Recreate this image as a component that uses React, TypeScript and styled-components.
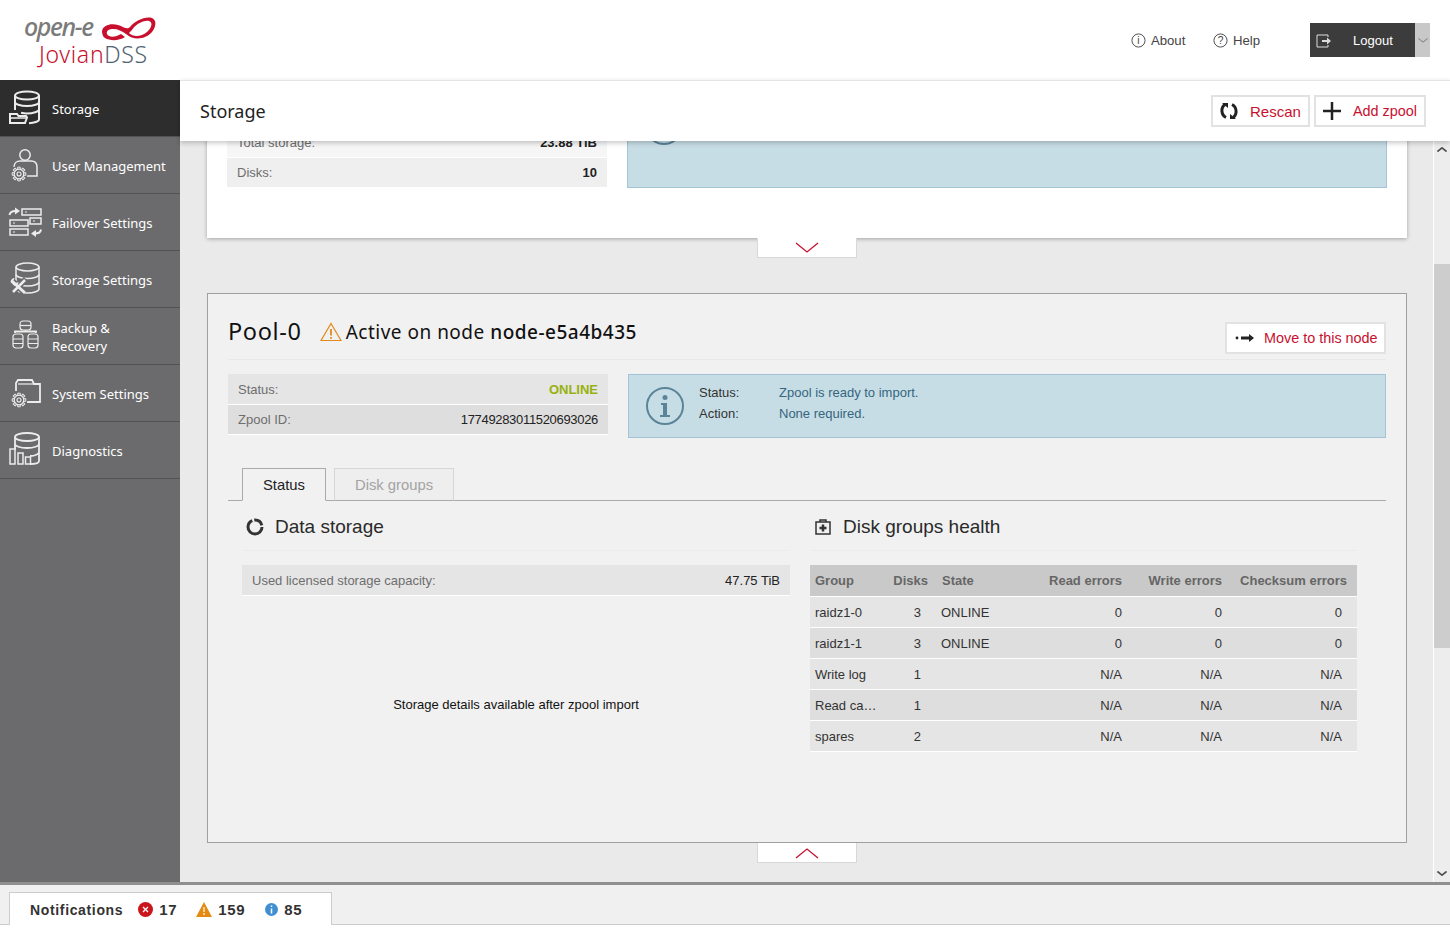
import React from "react";
import styled, { createGlobalStyle } from "styled-components";

const GlobalStyle = createGlobalStyle`
  html, body {
    margin: 0;
    padding: 0;
    height: 100%;
    overflow: hidden;
    background: #fff;
    font-family: "Liberation Sans", Arial, sans-serif;
  }
  * { box-sizing: border-box; }
`;

const RED = "#c8102e";
const titleFont = `"Noto Sans", "Open Sans", sans-serif`;

const Page = styled.div`
  width: 1450px;
  height: 930px;
  display: flex;
  flex-direction: column;
  overflow: hidden;
`;

const TopBar = styled.header`
  height: 80px;
  flex: none;
  background: #fff;
  display: flex;
  align-items: center;
  padding: 0 20px 0 24px;
`;

const Logo = styled.div`
  width: 140px;
  height: 56px;
  margin-top: -2px;
  display: flex;
  flex-direction: column;
`;

const LogoTop = styled.div`
  display: flex;
  align-items: center;
  height: 30px;
`;

const LogoOpen = styled.span`
  font-family: ${titleFont};
  font-style: italic;
  font-weight: 500;
  font-size: 25px;
  line-height: 30px;
  color: #7b7b7b;
  letter-spacing: -1.4px;
  width: 78px;
`;

const LogoName = styled.div`
  font-family: ${titleFont};
  font-weight: 300;
  font-size: 23px;
  line-height: 26px;
  color: ${RED};
  padding-left: 15px;
  letter-spacing: 0.7px;
  span { color: #4f6472; }
`;

const TopActions = styled.div`
  margin-left: auto;
  display: flex;
  align-items: center;
`;

const TopLink = styled.a<{ $gap: number }>`
  display: flex;
  align-items: center;
  gap: 4.5px;
  font-size: 13.2px;
  color: #444;
  margin-right: ${(p) => p.$gap}px;
  padding-top: 1px;
  svg { flex: none; }
`;

const LogoutButton = styled.div`
  width: 105px;
  height: 34px;
  background: #3c3c3c;
  color: #fff;
  font-size: 13px;
  display: flex;
  align-items: center;
  padding: 1px 0 0 6px;
  span { margin-left: 21px; }
`;

const LogoutCaret = styled.div`
  width: 15px;
  height: 34px;
  background: #c8c8c8;
  display: flex;
  align-items: center;
  justify-content: center;
`;

const Body = styled.div`
  flex: 1;
  display: flex;
  min-height: 0;
`;

const Sidebar = styled.nav`
  width: 180px;
  flex: none;
  background: #6b6b6d;
`;

const NavItem = styled.div<{ $active?: boolean }>`
  height: 57px;
  display: flex;
  align-items: center;
  background: ${(p) => (p.$active ? "#2d2d2d" : "transparent")};
  border-bottom: 1px solid #525254;
  padding-left: 8px;
  color: #fff;
  font-family: ${titleFont};
  font-size: 13px;
  line-height: 18px;
  svg { flex: none; margin-right: 8px; }
  span { padding-top: 2px; }
`;

const Right = styled.div`
  flex: 1;
  min-width: 0;
  display: flex;
  flex-direction: column;
`;

const TitleBar = styled.div`
  height: 61px;
  flex: none;
  background: #fff;
  border-top: 1px solid #e4e4e4;
  display: flex;
  align-items: center;
  padding: 0 24px 0 20px;
  box-shadow: 0 2px 5px rgba(0, 0, 0, 0.22);
  position: relative;
  z-index: 2;
  h1 {
    margin: 0;
    font-family: ${titleFont};
    font-weight: 400;
    font-size: 18px;
    color: #222;
  }
`;

const TitleButtons = styled.div`
  margin-left: auto;
  display: flex;
  gap: 4px;
`;

const ActionButton = styled.button<{ $w: number; $pad: number; $gap: number; $size?: number }>`
  width: ${(p) => p.$w}px;
  height: 32px;
  background: #fff;
  border: 2px solid #e2e2e2;
  color: ${RED};
  font-family: "Liberation Sans", Arial, sans-serif;
  font-size: ${(p) => p.$size || 15}px;
  display: flex;
  align-items: center;
  gap: ${(p) => p.$gap}px;
  padding: 0 0 0 ${(p) => p.$pad}px;
  white-space: nowrap;
  svg { flex: none; }
`;

const ScrollWrap = styled.div`
  flex: 1;
  min-height: 0;
  display: flex;
  background: #eaeaea;
`;

const Scroller = styled.div`
  flex: 1;
  min-width: 0;
  overflow: hidden;
  padding: 0 26px 0 27px;
`;

const ScrollContent = styled.div`
  margin-top: -97px;
`;

const Scrollbar = styled.div`
  width: 17px;
  flex: none;
  background: #ededed;
  border-left: 1px solid #fff;
  display: flex;
  flex-direction: column;
`;

const ScrollArrow = styled.div`
  height: 17px;
  display: flex;
  align-items: center;
  justify-content: center;
  flex: none;
`;

const ScrollTrack = styled.div`
  flex: 1;
  padding-top: 106px;
`;

const ScrollThumb = styled.div`
  height: 384px;
  background: #cdcdcd;
`;

const TopCard = styled.section`
  height: 194px;
  background: #fff;
  padding: 20px 20px 50px;
  display: grid;
  grid-template-columns: 380px 760px;
  column-gap: 20px;
  box-shadow: 0 1px 4px rgba(0, 0, 0, 0.3);
`;

const FadedRows = styled.div`
  display: flex;
  flex-direction: column;
  justify-content: flex-end;
`;

const KvRow = styled.div<{ $bg: string }>`
  height: 31px;
  background: ${(p) => p.$bg};
  border-bottom: 1px solid #fff;
  display: flex;
  align-items: center;
  justify-content: space-between;
  padding: 0 10px;
  font-size: 13px;
  color: #6e6e6e;
  &:last-child { height: 30px; }
`;

const KvValue = styled.span<{ $color?: string; $bold?: boolean; $tight?: boolean }>`
  color: ${(p) => p.$color || "#222"};
  font-weight: ${(p) => (p.$bold ? 700 : 400)};
  letter-spacing: ${(p) => (p.$tight ? "-0.32px" : "0")};
`;

const InfoBox = styled.div`
  background: #c7dde5;
  border: 1px solid #a3c4d4;
  display: flex;
  align-items: center;
  padding-left: 16px;
  font-size: 13px;
  svg { flex: none; }
`;

const InfoGrid = styled.div`
  display: grid;
  grid-template-columns: 80px auto;
  row-gap: 3px;
  margin: -5px 0 0 14px;
  line-height: 18px;
  color: #333;
  b { font-weight: 400; color: #35657f; }
`;

const Toggle = styled.div`
  width: 100px;
  height: 20px;
  margin: 0 auto;
  background: #fff;
  border: 1px solid #d8d8d8;
  border-top: none;
  display: flex;
  align-items: center;
  justify-content: center;
`;

const PoolCard = styled.section`
  height: 550px;
  margin-top: 35px;
  background: #f1f1f1;
  border: 1px solid #a0a0a0;
  padding: 0 20px;
`;

const PoolHead = styled.div`
  height: 66px;
  border-bottom: 1px solid #e8e8e8;
  display: flex;
  align-items: flex-start;
  padding-top: 21px;
  font-family: ${titleFont};
  color: #111;
`;

const PoolName = styled.h2`
  margin: 0 18px 0 0;
  font-weight: 400;
  font-size: 23.5px;
  line-height: 32px;
  letter-spacing: 0.65px;
`;

const PoolNote = styled.span`
  font-size: 19px;
  line-height: 34px;
  margin-left: 4px;
  letter-spacing: 0.5px;
  b { font-weight: 500; }
`;

const PoolNoteIcon = styled.span`
  display: flex;
  height: 34px;
  align-items: center;
`;

const MoveButton = styled(ActionButton)`
  margin-left: auto;
  margin-top: 7px;
  background: #fff;
`;

const PoolSummary = styled.div`
  display: grid;
  grid-template-columns: 380px 758px;
  column-gap: 20px;
  margin-top: 14px;
  height: 64px;
`;

const Tabs = styled.div`
  display: flex;
  gap: 8px;
  margin-top: 30px;
  height: 33px;
  padding-left: 14px;
  border-bottom: 1px solid #aaa;
`;

const TabButton = styled.div<{ $active?: boolean }>`
  height: 33px;
  padding: 0 20px;
  display: flex;
  align-items: center;
  font-size: 14.8px;
  color: ${(p) => (p.$active ? "#222" : "#a3a3a3")};
  background: ${(p) => (p.$active ? "#f1f1f1" : "#eee")};
  border: 1px solid ${(p) => (p.$active ? "#aaa" : "#d6d6d6")};
  border-bottom: ${(p) => (p.$active ? "1px solid #f1f1f1" : "1px solid #aaa")};
`;

const Columns = styled.div`
  display: grid;
  grid-template-columns: 548px 547px;
  column-gap: 20px;
  margin-left: 14px;
`;

const SectionHead = styled.div`
  height: 50px;
  border-bottom: 1px solid #ebebeb;
  display: flex;
  align-items: center;
  gap: 11px;
  padding: 2px 0 0 4px;
  font-size: 19px;
  color: #2a2a2a;
`;

const UsedRow = styled.div`
  height: 31px;
  margin-top: 14px;
  background: #e5e5e5;
  border-bottom: 1px solid #fff;
  display: flex;
  align-items: center;
  justify-content: space-between;
  padding: 0 10px;
  font-size: 13px;
  color: #6e6e6e;
`;

const EmptyNote = styled.div`
  margin-top: 101px;
  text-align: center;
  font-size: 13px;
  color: #111;
`;

const Table = styled.table`
  width: 547px;
  margin-top: 14px;
  border-collapse: separate;
  border-spacing: 0;
  table-layout: fixed;
  font-size: 13px;
  th {
    height: 32px;
    background: #c9c9c9;
    border-bottom: 1px solid #fff;
    color: #666;
    font-weight: 700;
    padding: 0 5px;
    text-align: left;
    white-space: nowrap;
  }
  td {
    height: 31px;
    color: #333;
    padding: 0 5px;
    border-bottom: 1px solid #fff;
    overflow: hidden;
    white-space: nowrap;
    text-overflow: ellipsis;
  }
  tbody tr:nth-child(odd) td { background: #e5e5e5; }
  tbody tr:nth-child(even) td { background: #dedede; }
  .num { text-align: right; }
  td.disks { padding-right: 12px; }
  td.group { padding-right: 8px; }
  td.state { padding-left: 8px; }
  th.state { padding-left: 9px; }
  td.sum { padding-right: 15px; }
  th.sum { padding-right: 10px; }
`;

const FooterLine = styled.div`
  height: 48px;
  flex: none;
  background: #f0f0f0;
  border-top: 3px solid #8f8f8f;
  box-shadow: inset 0 -5px 0 #fff, inset 0 -6px 0 #ccc;
  padding: 7px 0 0 9px;
`;

const NotifyTab = styled.div`
  width: 323px;
  height: 33px;
  background: #fff;
  border: 1px solid #ccc;
  border-bottom: none;
  display: flex;
  align-items: center;
  padding: 1px 0 0 20px;
  font-size: 14px;
  font-weight: 700;
  color: #333;
  letter-spacing: 0.65px;
`;

const NotifyCount = styled.span<{ $left: number }>`
  display: flex;
  align-items: center;
  gap: 6px;
  margin-left: ${(p) => p.$left}px;
  font-size: 15px;
  svg { flex: none; }
`;

const stroke = { fill: "none", stroke: "#ececec", strokeWidth: 1.5 };
const NAV_BG = "#6b6b6d";

const Disks = () => (
  <>
    <ellipse cx="19.500" cy="6" rx="11.500" ry="4" />
    <path d="M8 6v22c0 2 5 4 11.500 4S31 30 31 28V6" />
    <path d="M8 13.500c0 2 5 4 11.500 4s11.500-2 11.500-4M8 21c0 2 5 4 11.500 4S31 23 31 21" />
  </>
);

const Gear = ({ x, y, bg = NAV_BG }: { x: number; y: number; bg?: string }) => (
  <g transform={`translate(${x} ${y})`}>
    <circle r="8.500" fill={bg} stroke="none" />
    {[0, 45, 90, 135, 180, 225, 270, 315].map((a) => (
      <path key={a} d="M-1.300-6.800h2.600v2.600h-2.600z" transform={`rotate(${a})`} fill={bg} strokeWidth="1" />
    ))}
    <circle r="4.800" fill={bg} strokeWidth="1.200" />
    <circle r="2" strokeWidth="1.100" />
  </g>
);

const NavIcon = ({ kind }: { kind: string }) => (
  <svg width="36" height="36" viewBox="0 0 36 36" {...stroke}>
    {kind === "storage" && (
      <>
        <ellipse cx="19" cy="5.500" rx="12" ry="4" strokeWidth="2" />
        <path d="M31 5.500v24c0 2-5 3.500-10 3.700M7 5.500V20M7 12c0 2 5 4 12 4s12-2 12-4M13 22.800c2 .5 4 .7 6 .7 6 0 12-2 12-4" strokeWidth="2" />
        <path d="M2 33V24h7l1.500 2H18l1 1.500-2 5.500z" fill="#2d2d2d" strokeWidth="2" />
        <path d="M2.500 28h16" strokeWidth="1.500" />
      </>
    )}
    {kind === "user" && (
      <>
        <circle cx="17" cy="8" r="5.200" />
        <path d="M6 20c0-4 3-6 6-6h11c4 0 6 2 6 6v9H18" />
        <Gear x={11} y={27} />
      </>
    )}
    {kind === "failover" && (
      <>
        <rect x="14" y="5" width="19" height="6" />
        <rect x="2" y="16" width="18" height="6" />
        <rect x="22" y="14" width="11" height="6" />
        <rect x="2" y="25" width="18" height="6" />
        <path d="M17 8h2M5 19h2M5 28h2M25 17h2" strokeWidth="1.200" />
        <path d="M1.500 11c.5-3 3-4 6-4" strokeWidth="2" />
        <path d="M7 3.500L12 7 7 10.500z" fill="#ececec" stroke="none" />
        <path d="M33 25.500c-.5 3-3 4-6 4" strokeWidth="2" />
        <path d="M28 33l-5-3.500 5-3.500z" fill="#ececec" stroke="none" />
      </>
    )}
    {kind === "settings" && (
      <>
        <Disks />
        <path d="M3 19l14 13M18 18L4 32" stroke={NAV_BG} strokeWidth="6" />
        <path d="M5 21l12 11" strokeWidth="3" />
        <path d="M17 19L5 31" strokeWidth="2.500" />
        <path d="M2.500 21c0-2 2-4 4-4l-1 3 2 2 3-1c0 2-2 4-4 4z" fill="#ececec" stroke="none" />
      </>
    )}
    {kind === "backup" && (
      <>
        <rect x="12" y="3" width="11" height="9" rx="3" strokeWidth="1.200" />
        <path d="M12 7.500h11" strokeWidth="1.200" />
        <path d="M7 15v-1.500h21V15M17.500 12v2" strokeWidth="1.800" />
        <rect x="5" y="16" width="10" height="14" rx="3" strokeWidth="1.200" />
        <rect x="20" y="16" width="10" height="14" rx="3" strokeWidth="1.200" />
        <path d="M5 21h10M5 25.500h10M20 21h10M20 25.500h10" strokeWidth="1.200" />
      </>
    )}
    {kind === "system" && (
      <>
        <path d="M8 16V8l2-3h14l2 4h6v18H19" strokeWidth="1.800" />
        <path d="M10 9h16" strokeWidth="1.200" />
        <Gear x={11} y={25} />
      </>
    )}
    {kind === "diag" && (
      <>
        <ellipse cx="19" cy="5" rx="12" ry="4" strokeWidth="1.800" />
        <path d="M31 5v24c0 2-4 3-9 3M7 5v13M7 12c0 2 5 4 12 4s12-2 12-4M22 24c5 0 9-2 9-4" strokeWidth="1.800" />
        <rect x="2" y="17" width="5" height="15" fill={NAV_BG} />
        <rect x="10" y="21" width="5" height="11" fill={NAV_BG} />
        <rect x="17.500" y="25" width="5" height="7" fill={NAV_BG} />
      </>
    )}
  </svg>
);

const Chevron = ({ up, color = RED, w = 24, sw = 1.3 }: { up?: boolean; color?: string; w?: number; sw?: number }) => (
  <svg width={w} height={w / 2} viewBox="0 0 24 12" fill="none" stroke={color} strokeWidth={sw}>
    <path d={up ? "M1 11L12 2l11 9" : "M1 1l11 9L23 1"} />
  </svg>
);

const BigInfo = () => (
  <svg width="40" height="40" viewBox="0 0 40 40" fill="none" stroke="#5b8499" strokeWidth="2">
    <circle cx="20" cy="20" r="18" />
    <circle cx="20" cy="11.500" r="2.500" fill="#5b8499" stroke="none" />
    <path d="M16 17h6v12h3v2H15v-2h3V19h-2z" fill="#5b8499" stroke="none" />
  </svg>
);

const SmallCircleIcon = ({ mark }: { mark: string }) => (
  <svg width="15" height="15" viewBox="0 0 16 16" fill="none" stroke="#444">
    <circle cx="8" cy="8" r="7" />
    <text x="8" y="12" textAnchor="middle" fontSize="11" fontFamily="Liberation Sans" fill="#444" stroke="none">{mark}</text>
  </svg>
);

const rows = [
  ["raidz1-0", "3", "ONLINE", "0", "0", "0"],
  ["raidz1-1", "3", "ONLINE", "0", "0", "0"],
  ["Write log", "1", "", "N/A", "N/A", "N/A"],
  ["Read cache", "1", "", "N/A", "N/A", "N/A"],
  ["spares", "2", "", "N/A", "N/A", "N/A"],
];

const navItems = [
  { kind: "storage", label: "Storage", active: true },
  { kind: "user", label: "User Management" },
  { kind: "failover", label: "Failover Settings" },
  { kind: "settings", label: "Storage Settings" },
  { kind: "backup", label: <>Backup &amp;<br />Recovery</> },
  { kind: "system", label: "System Settings" },
  { kind: "diag", label: "Diagnostics" },
];

export default function App() {
  return (
    <Page>
      <GlobalStyle />
      <TopBar>
        <Logo>
          <LogoTop>
            <LogoOpen>open-e</LogoOpen>
            <svg width="54" height="26" viewBox="0 0 54 24" style={{ marginTop: 6 }}>
              <path
                fillRule="evenodd"
                d="M0 14C1 8 9 6 16 8c6 2 9 5 12 2C33 4 43-1 50 1c5 2 4 9 0 14-5 6-17 10-26 2-4-3-8-5-13-5-4 0-7 2-6 5 2 4 9 3 14 0l4 3c-6 4-15 4-20 1-2-1-3-4-3-7zM27 16c4 4 12 4 18-1 5-4 6-10 2-11-6-1-14 4-17 9z"
                fill={RED}
              />
            </svg>
          </LogoTop>
          <LogoName>Jovian<span>DSS</span></LogoName>
        </Logo>
        <TopActions>
          <TopLink $gap={28}><SmallCircleIcon mark="i" />About</TopLink>
          <TopLink $gap={50}><SmallCircleIcon mark="?" />Help</TopLink>
          <LogoutButton>
            <svg width="16" height="14" viewBox="0 0 16 14" fill="none" stroke="#ddd">
              <path d="M12 3V1H1v12h11v-2" />
              <path d="M6 6h5V3.500L15 7l-4 3.500V8H6z" fill="#ddd" stroke="none" />
            </svg>
            <span>Logout</span>
          </LogoutButton>
          <LogoutCaret><Chevron color="#888" w={10} sw={2.5} /></LogoutCaret>
        </TopActions>
      </TopBar>
      <Body>
        <Sidebar>
          {navItems.map((item) => (
            <NavItem key={item.kind} $active={item.active}>
              <NavIcon kind={item.kind} />
              <span>{item.label}</span>
            </NavItem>
          ))}
        </Sidebar>
        <Right>
          <TitleBar>
            <h1>Storage</h1>
            <TitleButtons>
              <ActionButton $w={99} $pad={6} $gap={11}>
                <svg width="20" height="20" viewBox="0 0 20 20" fill="none" stroke="#222" strokeWidth="3">
                  <path d="M6 3.500C1.500 6.500 2 14 7 16.500M14 16.500C18.500 13.500 18 6 13 3.500" />
                  <path d="M3 2h6v5zM17 18h-6v-5z" fill="#222" stroke="none" />
                </svg>
                Rescan
              </ActionButton>
              <ActionButton $w={112} $pad={6} $gap={11} $size={14.4}>
                <svg width="20" height="20" viewBox="0 0 20 20" fill="none" stroke="#222" strokeWidth="2.500">
                  <path d="M10 1v18M1 10h18" />
                </svg>
                Add zpool
              </ActionButton>
            </TitleButtons>
          </TitleBar>
          <ScrollWrap>
            <Scroller>
              <ScrollContent>
                <TopCard>
                  <FadedRows>
                    <KvRow $bg="#f6f6f6">Total storage:<KvValue $bold>23.88 TiB</KvValue></KvRow>
                    <KvRow $bg="#efefef">Disks:<KvValue $bold>10</KvValue></KvRow>
                  </FadedRows>
                  <InfoBox><BigInfo /></InfoBox>
                </TopCard>
                <Toggle><Chevron /></Toggle>
                <PoolCard>
                  <PoolHead>
                    <PoolName>Pool-0</PoolName>
                    <PoolNoteIcon>
                      <svg width="22" height="20" viewBox="0 0 22 20" fill="none" stroke="#e08a1e" strokeWidth="1.200">
                        <path d="M11 1.500L21 18.500H1z" />
                        <path d="M11 7v6.500M11 15v1.800" strokeWidth="1.800" />
                      </svg>
                    </PoolNoteIcon>
                    <PoolNote>Active on node <b>node-e5a4b435</b></PoolNote>
                    <MoveButton $w={161} $pad={8} $gap={9} $size={14.4}>
                      <svg width="20" height="10" viewBox="0 0 20 10" fill="#222">
                        <circle cx="2" cy="5" r="1.400" />
                        <path d="M6 3.500h8V1l5 4-5 4V6.500H6z" />
                      </svg>
                      Move to this node
                    </MoveButton>
                  </PoolHead>
                  <PoolSummary>
                    <div>
                      <KvRow $bg="#e5e5e5">Status:<KvValue $color="#97b20f" $bold>ONLINE</KvValue></KvRow>
                      <KvRow $bg="#dedede">Zpool ID:<KvValue $tight>17749283011520693026</KvValue></KvRow>
                    </div>
                    <InfoBox>
                      <BigInfo />
                      <InfoGrid>
                        <span>Status:</span><b>Zpool is ready to import.</b>
                        <span>Action:</span><b>None required.</b>
                      </InfoGrid>
                    </InfoBox>
                  </PoolSummary>
                  <Tabs>
                    <TabButton $active>Status</TabButton>
                    <TabButton>Disk groups</TabButton>
                  </Tabs>
                  <Columns>
                    <div>
                      <SectionHead>
                        <svg width="18" height="18" viewBox="0 0 18 18" fill="none" stroke="#333" strokeWidth="3">
                          <circle cx="9" cy="9" r="7" strokeDasharray="30 2 10 2" />
                        </svg>
                        Data storage
                      </SectionHead>
                      <UsedRow>Used licensed storage capacity:<KvValue>47.75 TiB</KvValue></UsedRow>
                      <EmptyNote>Storage details available after zpool import</EmptyNote>
                    </div>
                    <div>
                      <SectionHead>
                        <svg width="18" height="18" viewBox="0 0 18 18" fill="none" stroke="#333" strokeWidth="1.500">
                          <rect x="2" y="4" width="14" height="12" />
                          <path d="M6 4V2h6v2" />
                          <path d="M9 6.500v7M5.500 10h7" strokeWidth="2.500" />
                        </svg>
                        Disk groups health
                      </SectionHead>
                      <Table>
                        <colgroup>
                          <col style={{ width: 75 }} />
                          <col style={{ width: 48 }} />
                          <col style={{ width: 90 }} />
                          <col style={{ width: 104 }} />
                          <col style={{ width: 100 }} />
                          <col style={{ width: 130 }} />
                        </colgroup>
                        <thead>
                          <tr>
                            <th>Group</th>
                            <th className="num">Disks</th>
                            <th className="state">State</th>
                            <th className="num">Read errors</th>
                            <th className="num">Write errors</th>
                            <th className="num sum">Checksum errors</th>
                          </tr>
                        </thead>
                        <tbody>
                          {rows.map((r) => (
                            <tr key={r[0]}>
                              <td className="group">{r[0]}</td>
                              <td className="num disks">{r[1]}</td>
                              <td className="state">{r[2]}</td>
                              <td className="num">{r[3]}</td>
                              <td className="num">{r[4]}</td>
                              <td className="num sum">{r[5]}</td>
                            </tr>
                          ))}
                        </tbody>
                      </Table>
                    </div>
                  </Columns>
                </PoolCard>
                <Toggle><Chevron up /></Toggle>
              </ScrollContent>
            </Scroller>
            <Scrollbar>
              <ScrollArrow><Chevron color="#505050" w={10} sw={4} up /></ScrollArrow>
              <ScrollTrack><ScrollThumb /></ScrollTrack>
              <ScrollArrow><Chevron color="#505050" w={10} sw={4} /></ScrollArrow>
            </Scrollbar>
          </ScrollWrap>
        </Right>
      </Body>
      <FooterLine>
        <NotifyTab>
          Notifications
          <NotifyCount $left={15}>
            <svg width="15" height="15" viewBox="0 0 15 15">
              <circle cx="7.500" cy="7.500" r="7.500" fill="#c9161d" />
              <path d="M5 5l5 5M10 5l-5 5" stroke="#fff" strokeWidth="1.300" />
            </svg>
            17
          </NotifyCount>
          <NotifyCount $left={19}>
            <svg width="16" height="15" viewBox="0 0 16 15">
              <path d="M8 0l8 15H0z" fill="#e48a12" />
              <path d="M8 5v5M8 11v2" stroke="#fff" strokeWidth="1.200" />
            </svg>
            159
          </NotifyCount>
          <NotifyCount $left={20}>
            <svg width="13" height="13" viewBox="0 0 13 13">
              <circle cx="6.500" cy="6.500" r="6.500" fill="#3f8fd2" />
              <path d="M6.500 2.500v1.500M6.500 5.500v5" stroke="#fff" strokeWidth="1.500" />
            </svg>
            85
          </NotifyCount>
        </NotifyTab>
      </FooterLine>
    </Page>
  );
}
